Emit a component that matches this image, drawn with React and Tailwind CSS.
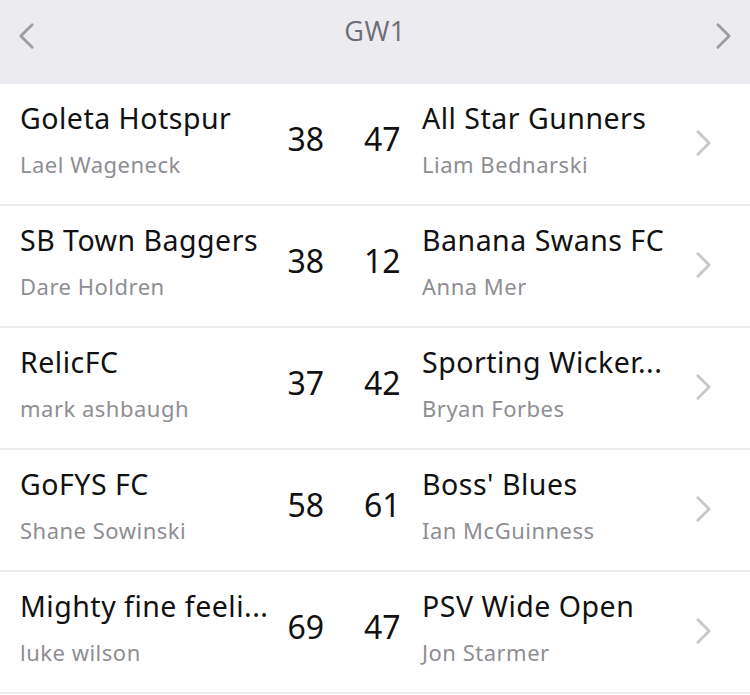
import React from "react";

const rows = [
  { ht: "Goleta Hotspur", hm: "Lael Wageneck", hs: 38, as: 47, at: "All Star Gunners", am: "Liam Bednarski" },
  { ht: "SB Town Baggers", hm: "Dare Holdren", hs: 38, as: 12, at: "Banana Swans FC", am: "Anna Mer" },
  { ht: "RelicFC", hm: "mark ashbaugh", hs: 37, as: 42, at: "Sporting Wicker...", am: "Bryan Forbes" },
  { ht: "GoFYS FC", hm: "Shane Sowinski", hs: 58, as: 61, at: "Boss' Blues", am: "Ian McGuinness" },
  { ht: "Mighty fine feeli...", hm: "luke wilson", hs: 69, as: 47, at: "PSV Wide Open", am: "Jon Starmer" },
];

function Chevron({ dir = "right", className = "" }) {
  return (
    <svg viewBox="0 0 18 28" className={className} fill="none" stroke="currentColor" strokeWidth="3" strokeLinecap="round" strokeLinejoin="round">
      {dir === "right" ? <path d="M3 2 L15 14 L3 26" /> : <path d="M15 2 L3 14 L15 26" />}
    </svg>
  );
}

export default function App() {
  return (
    <div className="w-[750px] h-[695px] bg-white overflow-hidden" style={{ fontFamily: "'Noto Sans', sans-serif" }}>
      <div className="h-[84px] bg-[#ebebf0] flex items-start justify-between px-[18px] pt-[22px]">
        <Chevron dir="left" className="w-[17px] h-[28px] text-[#9c9ca3]" />
        <div className="text-[27px] leading-[27px] tracking-[0.5px] -mt-[5px] text-[#6d6d75]" style={{ fontFamily: "'Open Sans', sans-serif" }}>GW1</div>
        <Chevron dir="right" className="w-[17px] h-[28px] text-[#9c9ca3]" />
      </div>
      {rows.map((r, i) => (
        <div key={i} className="h-[122px] border-b-2 border-[#ececec] flex items-center pb-[11px]">
          <div className="w-[275px] pl-[20px] flex flex-col">
            <div className="text-[28.5px] leading-[40px] tracking-[0.5px] text-[#111111] whitespace-nowrap">{r.ht}</div>
            <div className="text-[22px] leading-[30px] tracking-[0.5px] mt-[11px] text-[#8e8e93] whitespace-nowrap">{r.hm}</div>
          </div>
          <div className="w-[49px] text-right text-[32px] text-[#111111]">{r.hs}</div>
          <div className="w-[40px]" />
          <div className="w-[58px] text-[32px] text-[#111111]">{r.as}</div>
          <div className="flex-1 flex flex-col">
            <div className="text-[28.5px] leading-[40px] tracking-[0.5px] text-[#111111] whitespace-nowrap">{r.at}</div>
            <div className="text-[22px] leading-[30px] tracking-[0.5px] mt-[11px] text-[#8e8e93] whitespace-nowrap">{r.am}</div>
          </div>
          <Chevron dir="right" className="w-[17px] h-[28px] text-[#c7c7cc] mr-[38px] mt-[8px]" />
        </div>
      ))}
    </div>
  );
}
